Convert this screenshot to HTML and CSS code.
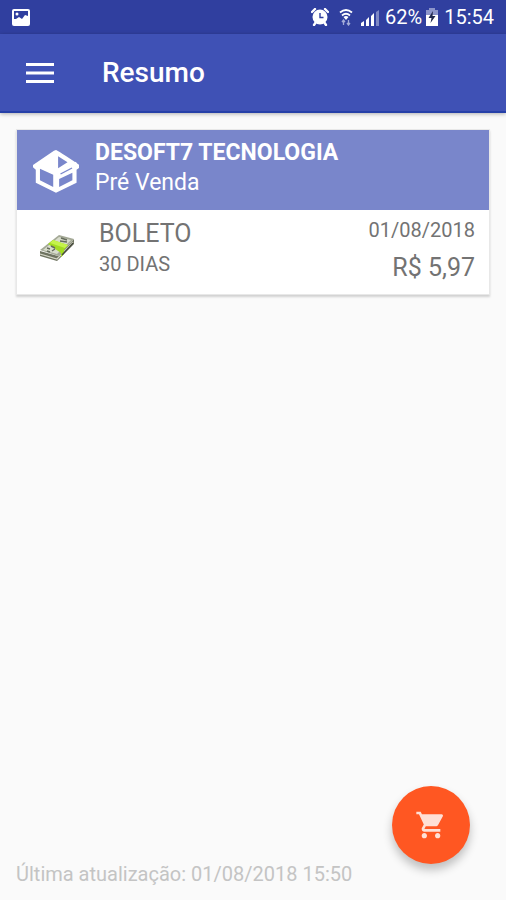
FILE: index.html
```html
<!DOCTYPE html>
<html lang="pt-BR">
<head>
<meta charset="utf-8">
<meta name="viewport" content="width=device-width, initial-scale=1">
<title>Resumo</title>
<link rel="stylesheet" href="styles.css">
</head>
<body>
<div class="status-bar">
  <svg class="status-picture" width="18" height="17" viewBox="0 0 18 17" aria-hidden="true">
    <rect width="18" height="17" rx="2" fill="#fff"/>
    <path d="M2 2h14v5l-3-1-3 4-3-2-3 2H2z" fill="#303f9f"/>
    <circle cx="5" cy="5" r="1.5" fill="#fff"/>
  </svg>
  <div class="status-info">
    <svg class="status-alarm" width="18" height="18" viewBox="0 0 18 18" aria-hidden="true">
      <circle cx="9" cy="9" r="7.5" fill="#fff"/>
      <path d="M1 4l3-3M17 4l-3-3M3 17l2-3M15 17l-2-3" stroke="#fff" stroke-width="2.4" stroke-linecap="round"/>
      <path d="M9 5v4.5h3.5" fill="none" stroke="#303f9f" stroke-width="1.4"/>
    </svg>
    <svg class="status-wifi" width="14" height="18" viewBox="0 0 14 18" aria-hidden="true">
      <path d="M1 4.5Q7-.5 13 4.5M3 7.5Q7 4 11 7.5" fill="none" stroke="#fff" stroke-width="1.8"/>
      <path d="M4.5 9Q7 7 9.500 9L7 12z" fill="#fff"/>
      <path d="M4.500 17v-5m-1.500 2l1.500-2 1.500 2M9.500 12v5m-1.500-2l1.500 2 1.500-2" fill="none" stroke="#a3abd8" stroke-width="1.300"/>
    </svg>
    <svg class="status-signal" width="18" height="17" viewBox="0 0 18 17" aria-hidden="true">
      <path d="M0 17v-3l3-2v5zM5 17v-6l3-3v9zM10 17V7l3-3v13z" fill="#fff"/>
      <path d="M15 17V3l3-2v16z" fill="#7d87c4"/>
    </svg>
    <span>62%</span>
    <svg class="status-battery" width="12" height="18" viewBox="0 0 12 18" aria-hidden="true">
      <path d="M3 0h6v2h3v5H0V2h3z" fill="#8c95ca"/>
      <path d="M0 7h12v11H0z" fill="#fff"/>
      <path d="M7 3L2.500 10H5.500L4.500 15 9.500 8H6.500z" fill="#20284d"/>
    </svg>
    <time>15:54</time>
  </div>
</div>

<header class="app-bar">
  <button class="menu-button" type="button" aria-label="Menu">
    <svg width="28" height="20" viewBox="0 0 28 20" aria-hidden="true">
      <path d="M0 1.500h28M0 10h28M0 18.500h28" stroke="#fff" stroke-width="2.800"/>
    </svg>
  </button>
  <h1 class="app-title">Resumo</h1>
</header>

<main class="content">
  <article class="card">
    <div class="card-header">
      <svg class="box-icon" width="46" height="44" viewBox="26 25 132 132" preserveAspectRatio="none" aria-hidden="true">
        <path d="M92 28Q95 28 158 72V82L151 87V126L92 156 34 126V87L26 80V73L86 30z" fill="#fff"/>
        <path d="M98 47L125 65 98 83zM46 84L84 102V139L46 119zM101 115L139 96V119L101 139zM97 97L136 75 141 79 102 101z" fill="#7986cb"/>
        <path d="M92 93L149 63 157 77 103 107z" fill="#fff"/>
        <path d="M105 100L138 82" stroke="#7986cb" stroke-width="4"/>
      </svg>
      <div>
        <h2 class="company">DESOFT7 TECNOLOGIA</h2>
        <p class="kind">Pré Venda</p>
      </div>
    </div>
    <div class="card-row">
      <svg class="money-icon" width="36" height="28" viewBox="0 0 36 28" aria-hidden="true">
        <path d="M1 17L19 22 35 5V10L18 27 1 22z" fill="#6f7461"/>
        <path d="M1 20L18 25 34 8" fill="none" stroke="#d5d6c7" stroke-width="1.200"/>
        <path d="M1 16L20 1 35 5 19 22z" fill="#a4a996"/>
        <path d="M4 16L20 3 32 6 18 20z" fill="#d8dccc"/>
        <path d="M14 6L29 11 25 16V20L22 23V19L9 10z" fill="#a3dc22"/>
        <path d="M14 6L29 11 26 14 11 9z" fill="#c5f34b"/>
        <path d="M8 14l3 1M12 12l4 2M8 17l3 1M13 17l3-2M22 4l6 2M21 7l7 1" stroke="#656c5c" stroke-width="1.400"/>
        <path d="M23 21L34 9" stroke="#45483d" stroke-width="1.200"/>
      </svg>
      <div class="payment">
        <p class="large">BOLETO</p>
        <p class="term">30 DIAS</p>
      </div>
      <div class="amount">
        <time class="date" datetime="2018-08-01">01/08/2018</time>
        <p class="large">R$ 5,97</p>
      </div>
    </div>
  </article>
</main>

<footer class="footer">Última atualização: 01/08/2018 15:50</footer>

<button class="cart-button" type="button" aria-label="Carrinho">
  <svg width="32" height="32" viewBox="0 0 24 24" aria-hidden="true">
    <path fill="#ffe0d6" d="M7 18c-1.100 0-1.990.9-1.990 2S5.900 22 7 22s2-.9 2-2-.9-2-2-2zM1 2v2h2l3.600 7.590-1.350 2.450c-.16.280-.25.610-.25.960 0 1.100.9 2 2 2h12v-2H7.420c-.14 0-.25-.11-.25-.25l.03-.12.900-1.630h7.450c.75 0 1.410-.41 1.750-1.030l3.580-6.490A1.003 1.003 0 0 0 20 4H5.210l-.94-2H1zm16 16c-1.100 0-1.990.9-1.990 2s.89 2 1.990 2 2-.9 2-2-.9-2-2-2z"/>
  </svg>
</button>
</body>
</html>
```

FILE: styles.css
```css
* {
  box-sizing: border-box;
}

body {
  margin: 0;
  min-height: 100vh;
  display: flex;
  flex-direction: column;
  background: #fafafa;
  color: #737373;
  font-family: Roboto, "Liberation Sans", sans-serif;
  font-size: 20px;
  line-height: 24px;
}

h1,
h2,
p {
  margin: 0;
}

button {
  border: 0;
  padding: 0;
  cursor: pointer;
}

svg {
  display: block;
  flex: none;
}

.status-bar {
  display: flex;
  align-items: center;
  justify-content: space-between;
  height: 34px;
  padding: 0 12px;
  background: #303f9f;
  color: #fff;
}

.status-info {
  display: flex;
  align-items: center;
}

.status-wifi {
  margin-left: 10px;
}

.status-signal {
  margin: 0 6px 0 8px;
}

.status-battery {
  margin: 0 6px 0 4px;
}

.app-bar {
  display: flex;
  align-items: center;
  height: 79px;
  padding: 0 16px;
  background: #3f51b5;
  border-bottom: 2px solid #2640a8;
  box-shadow: 0 1px 4px rgba(0, 0, 0, 0.3);
  color: #fff;
}

.menu-button {
  display: grid;
  place-items: center;
  width: 48px;
  height: 48px;
  margin-right: 38px;
  background: none;
}

.app-title {
  font-size: 28px;
  font-weight: 500;
  line-height: 32px;
}

.content {
  flex: 1;
  padding: 16px;
}

.card {
  background: #fff;
  border: 1px solid #e8e8e8;
  box-shadow: 0 2px 2px rgba(0, 0, 0, 0.16);
}

.card-header {
  display: flex;
  gap: 16px;
  padding: 8px 16px 12px;
  background: #7986cb;
  color: #fff;
  line-height: 30px;
}

.box-icon {
  margin-top: 11px;
}

.company {
  font-size: 23px;
  font-weight: 700;
}

.kind {
  font-size: 23px;
}

.card-row {
  display: flex;
  gap: 24px;
  padding: 8px 14px 10px 22px;
}

.money-icon {
  margin-top: 16px;
}

.payment {
  flex: 1;
}

.large {
  font-size: 25px;
  line-height: 32px;
}

.term {
  line-height: 28px;
}

.amount {
  display: flex;
  flex-direction: column;
  gap: 10px;
  text-align: right;
}

.footer {
  padding: 0 16px 14px;
  color: #c4c4c4;
}

.cart-button {
  position: fixed;
  right: 36px;
  bottom: 36px;
  display: grid;
  place-items: center;
  width: 78px;
  height: 78px;
  border-radius: 50%;
  background: #ff5722;
  box-shadow: 0 6px 10px rgba(0, 0, 0, 0.24);
}
```
